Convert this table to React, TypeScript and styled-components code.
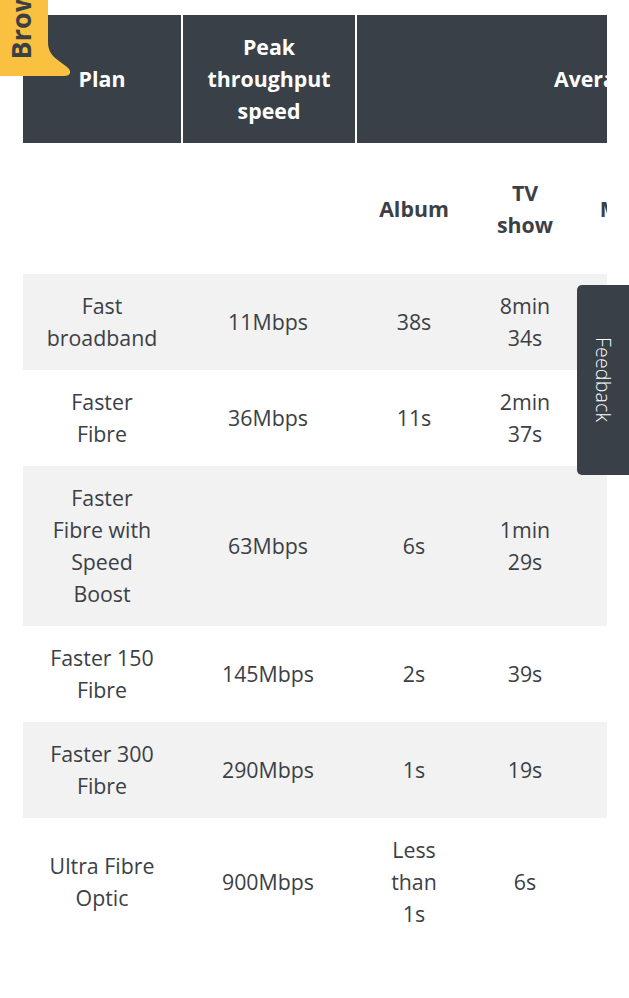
import { createGlobalStyle, styled } from "styled-components";

const colors = {
	ink: "#3b4046",
	slate: "#394047",
	stripe: "#f2f2f2",
	amber: "#f9c13f",
	white: "#ffffff",
};

const GlobalStyle = createGlobalStyle`
	* { box-sizing: border-box; }
	html, body {
		margin: 0;
		background: ${colors.white};
		font-family: "Open Sans", "Noto Sans", sans-serif;
		color: ${colors.ink};
	}
`;

const Page = styled.div`
	position: relative;
	min-height: 998px;
	padding: 15px 22px 0 23px;
`;

const Scroller = styled.div`
	overflow: hidden;
	width: 100%;
`;

const Table = styled.table`
	border-collapse: separate;
	border-spacing: 0;
	table-layout: fixed;
	width: 980px;
	font-size: 21.33px;
	line-height: 32px;
`;

const HeadCell = styled.th<{ $first?: boolean; $nowrap?: boolean }>`
	background: ${colors.slate};
	color: ${colors.white};
	font-weight: 700;
	text-align: center;
	vertical-align: middle;
	padding: 16px 20px;
	border-left: ${({ $first }) => ($first ? "none" : `2px solid ${colors.white}`)};
	white-space: ${({ $nowrap }) => ($nowrap ? "nowrap" : "normal")};
`;

const SubCell = styled.th`
	height: 131px;
	padding: 16px 22px;
	font-weight: 700;
	text-align: center;
	vertical-align: middle;
	color: ${colors.ink};
`;

const Row = styled.tr<{ $striped: boolean }>`
	background: ${({ $striped }) => ($striped ? colors.stripe : colors.white)};
`;

const Cell = styled.td<{ $tight?: boolean }>`
	padding: ${({ $tight }) => ($tight ? "16px 24px" : "16px 22px")};
	text-align: center;
	vertical-align: middle;
	font-weight: 400;
`;

const Badge = styled.div`
	position: absolute;
	top: 0;
	left: 0;
	width: 72px;
	height: 76px;
	overflow: hidden;
	z-index: 5;
`;

const BadgeShape = styled.svg`
	position: absolute;
	inset: 0;
`;

const BadgeLabel = styled.span`
	position: absolute;
	left: 7px;
	bottom: 17px;
	writing-mode: vertical-rl;
	transform: rotate(180deg);
	font-size: 27px;
	line-height: 27px;
	font-weight: 700;
	white-space: nowrap;
	color: ${colors.ink};
`;

const FeedbackTab = styled.div`
	position: absolute;
	top: 285px;
	right: 0;
	width: 52px;
	height: 190px;
	background: ${colors.slate};
	border-radius: 5px 0 0 5px;
	display: flex;
	align-items: center;
	justify-content: center;
	z-index: 5;
`;

const FeedbackText = styled.span`
	writing-mode: vertical-rl;
	color: ${colors.white};
	font-size: 19.5px;
	font-weight: 300;
	letter-spacing: 0.2px;
`;

const columns = [158, 174, 118, 104, 110, 158, 158];

const rows = [
	{ plan: "Fast broadband", peak: "11Mbps", album: "38s", tv: "8min 34s" },
	{ plan: "Faster Fibre", peak: "36Mbps", album: "11s", tv: "2min 37s" },
	{ plan: "Faster Fibre with Speed Boost", peak: "63Mbps", album: "6s", tv: "1min 29s" },
	{ plan: "Faster 150 Fibre", peak: "145Mbps", album: "2s", tv: "39s" },
	{ plan: "Faster 300 Fibre", peak: "290Mbps", album: "1s", tv: "19s" },
	{ plan: "Ultra Fibre Optic", peak: "900Mbps", album: "Less than 1s", tv: "6s" },
];

export default function App() {
	return (
		<>
			<GlobalStyle />
			<Page>
				<Badge>
					<BadgeShape width="72" height="76" viewBox="0 0 72 76">
						<path
							d="M0 0 H48 V42 C48 51 52 56 59 61 L67 67 C72 71 71 76 64 76 H0 Z"
							fill={colors.amber}
						/>
					</BadgeShape>
					<BadgeLabel>Browse plans</BadgeLabel>
				</Badge>

				<Scroller>
					<Table>
						<colgroup>
							{columns.map((w, i) => (
								<col key={i} style={{ width: w }} />
							))}
						</colgroup>
						<thead>
							<tr>
								<HeadCell $first>Plan</HeadCell>
								<HeadCell>Peak throughput speed</HeadCell>
								<HeadCell colSpan={5} $nowrap>
									Average download time
								</HeadCell>
							</tr>
							<tr>
								<SubCell />
								<SubCell />
								<SubCell>Album</SubCell>
								<SubCell>TV show</SubCell>
								<SubCell>Movie</SubCell>
								<SubCell>HD movie</SubCell>
								<SubCell>Game</SubCell>
							</tr>
						</thead>
						<tbody>
							{rows.map((r, i) => (
								<Row key={r.plan} $striped={i % 2 === 0}>
									<Cell>{r.plan}</Cell>
									<Cell>{r.peak}</Cell>
									<Cell $tight>{r.album}</Cell>
									<Cell>{r.tv}</Cell>
									<Cell />
									<Cell />
									<Cell />
								</Row>
							))}
						</tbody>
					</Table>
				</Scroller>

				<FeedbackTab>
					<FeedbackText>Feedback</FeedbackText>
				</FeedbackTab>
			</Page>
		</>
	);
}
